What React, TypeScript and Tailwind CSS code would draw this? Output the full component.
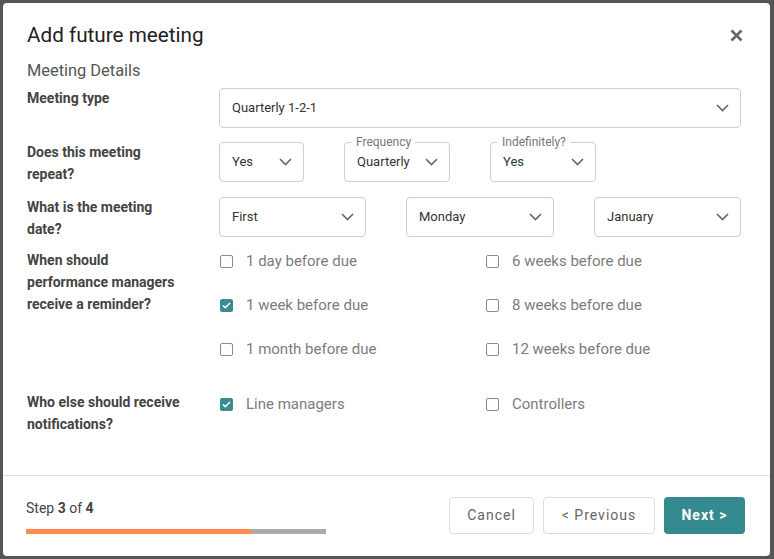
import React from "react";

function Chevron() {
  return (
    <svg width="13" height="8" viewBox="0 0 13 8" className="shrink-0">
      <path d="M1 1l5.5 5.5L12 1" fill="none" stroke="#666" strokeWidth="1.6" />
    </svg>
  );
}

function Select({ value, width, legend }: { value: string; width: string; legend?: string }) {
  return (
    <div className={`relative flex h-[40px] items-center justify-between rounded-[4px] border border-[#cfcfcf] pl-[12px] pr-[11px] ${width}`}>
      {legend && (
        <span className="absolute -top-[8px] left-[7px] bg-white px-[4px] text-[12px] leading-[14px] text-[#777]">{legend}</span>
      )}
      <span className="text-[13px] text-[#333]">{value}</span>
      <Chevron />
    </div>
  );
}

function Check({ label, checked }: { label: string; checked?: boolean }) {
  return (
    <div className="flex h-[22px] items-center">
      {checked ? (
        <span className="ml-[1px] flex h-[13px] w-[13px] items-center justify-center rounded-[2px] bg-[#3a8b92]">
          <svg width="9" height="7" viewBox="0 0 9 7">
            <path d="M1 3.5l2.3 2.2L8 1" fill="none" stroke="#fff" strokeWidth="1.6" />
          </svg>
        </span>
      ) : (
        <span className="ml-[1px] h-[13px] w-[13px] rounded-[2px] border border-[#8a8a8a]" />
      )}
      <span className="ml-[13px] text-[15px] text-[#7c7c7c]">{label}</span>
    </div>
  );
}

const labelCls = "w-[192px] shrink-0 text-[14px] font-bold leading-[22px] text-[#444]";

export default function App() {
  return (
    <div className="h-[559px] w-[774px] bg-[#555] p-[3px] pr-[4px] font-['Roboto',sans-serif]">
      <div className="flex h-[553px] flex-col rounded-[4px] bg-white">
        <div className="px-[24px]">
          <div className="flex items-center justify-between pt-[18px]">
            <h2 className="text-[20.7px] leading-[28px] text-[#222]">Add future meeting</h2>
            <svg width="13" height="13" viewBox="0 0 13 13" className="mr-[3px]">
              <path d="M1.5 1.5l10 10M11.5 1.5l-10 10" stroke="#666" strokeWidth="2.6" />
            </svg>
          </div>
          <div className="mt-[10px] text-[16.4px] leading-[24px] text-[#555]">Meeting Details</div>

          <div className="mt-[5px] flex h-[40px]">
            <div className={`${labelCls} -mt-[1px]`}>Meeting type</div>
            <Select value="Quarterly 1-2-1" width="w-[522px]" />
          </div>

          <div className="mt-[14px] flex h-[40px]">
            <div className={`${labelCls} -mt-[1px]`}>
              Does this meeting<br />repeat?
            </div>
            <div className="flex gap-[40px]">
              <Select value="Yes" width="w-[85px]" />
              <Select value="Quarterly" width="w-[106px]" legend="Frequency" />
              <Select value="Yes" width="w-[106px]" legend="Indefinitely?" />
            </div>
          </div>

          <div className="mt-[15px] flex h-[40px]">
            <div className={`${labelCls} -mt-[1px]`}>
              What is the meeting<br />date?
            </div>
            <div className="flex gap-[40px]">
              <Select value="First" width="w-[147px]" />
              <Select value="Monday" width="w-[148px]" />
              <Select value="January" width="w-[147px]" />
            </div>
          </div>

          <div className="mt-[12px] flex">
            <div className={labelCls}>
              When should<br />performance managers<br />receive a reminder?
            </div>
            <div className="grid w-[522px] grid-cols-[266px_1fr] gap-y-[22px] pt-[1px]">
              <Check label="1 day before due" />
              <Check label="6 weeks before due" />
              <Check label="1 week before due" checked />
              <Check label="8 weeks before due" />
              <Check label="1 month before due" />
              <Check label="12 weeks before due" />
            </div>
          </div>

          <div className="mt-[31px] flex">
            <div className={labelCls}>
              Who else should receive<br />notifications?
            </div>
            <div className="grid w-[522px] grid-cols-[266px_1fr] pt-[2px]">
              <Check label="Line managers" checked />
              <Check label="Controllers" />
            </div>
          </div>
        </div>

        <div className="mt-auto border-t border-[#e2e2e2] px-[23px] pb-[22px] pt-[21px]">
          <div className="flex items-center justify-between">
            <div>
              <div className="text-[14px] leading-[22px] text-[#444]">
                Step <b>3</b> of <b>4</b>
              </div>
              <div className="mt-[10px] flex h-[5px] w-[300px] bg-[#aaaaaa]">
                <div className="h-full w-[225px] bg-[#ff8c4f]" />
              </div>
            </div>
            <div className="flex gap-[9px] pr-[2px]">
              <button className="h-[37px] w-[85px] rounded-[4px] border border-[#dcdde3] text-[14px] tracking-[1px] text-[#666]">Cancel</button>
              <button className="h-[37px] w-[112px] rounded-[4px] border border-[#dcdde3] text-[14px] tracking-[1px] text-[#666]">&lt; Previous</button>
              <button className="h-[37px] w-[81px] rounded-[4px] bg-[#358a8f] text-[14px] font-bold tracking-[1px] text-white">Next &gt;</button>
            </div>
          </div>
        </div>
      </div>
    </div>
  );
}
